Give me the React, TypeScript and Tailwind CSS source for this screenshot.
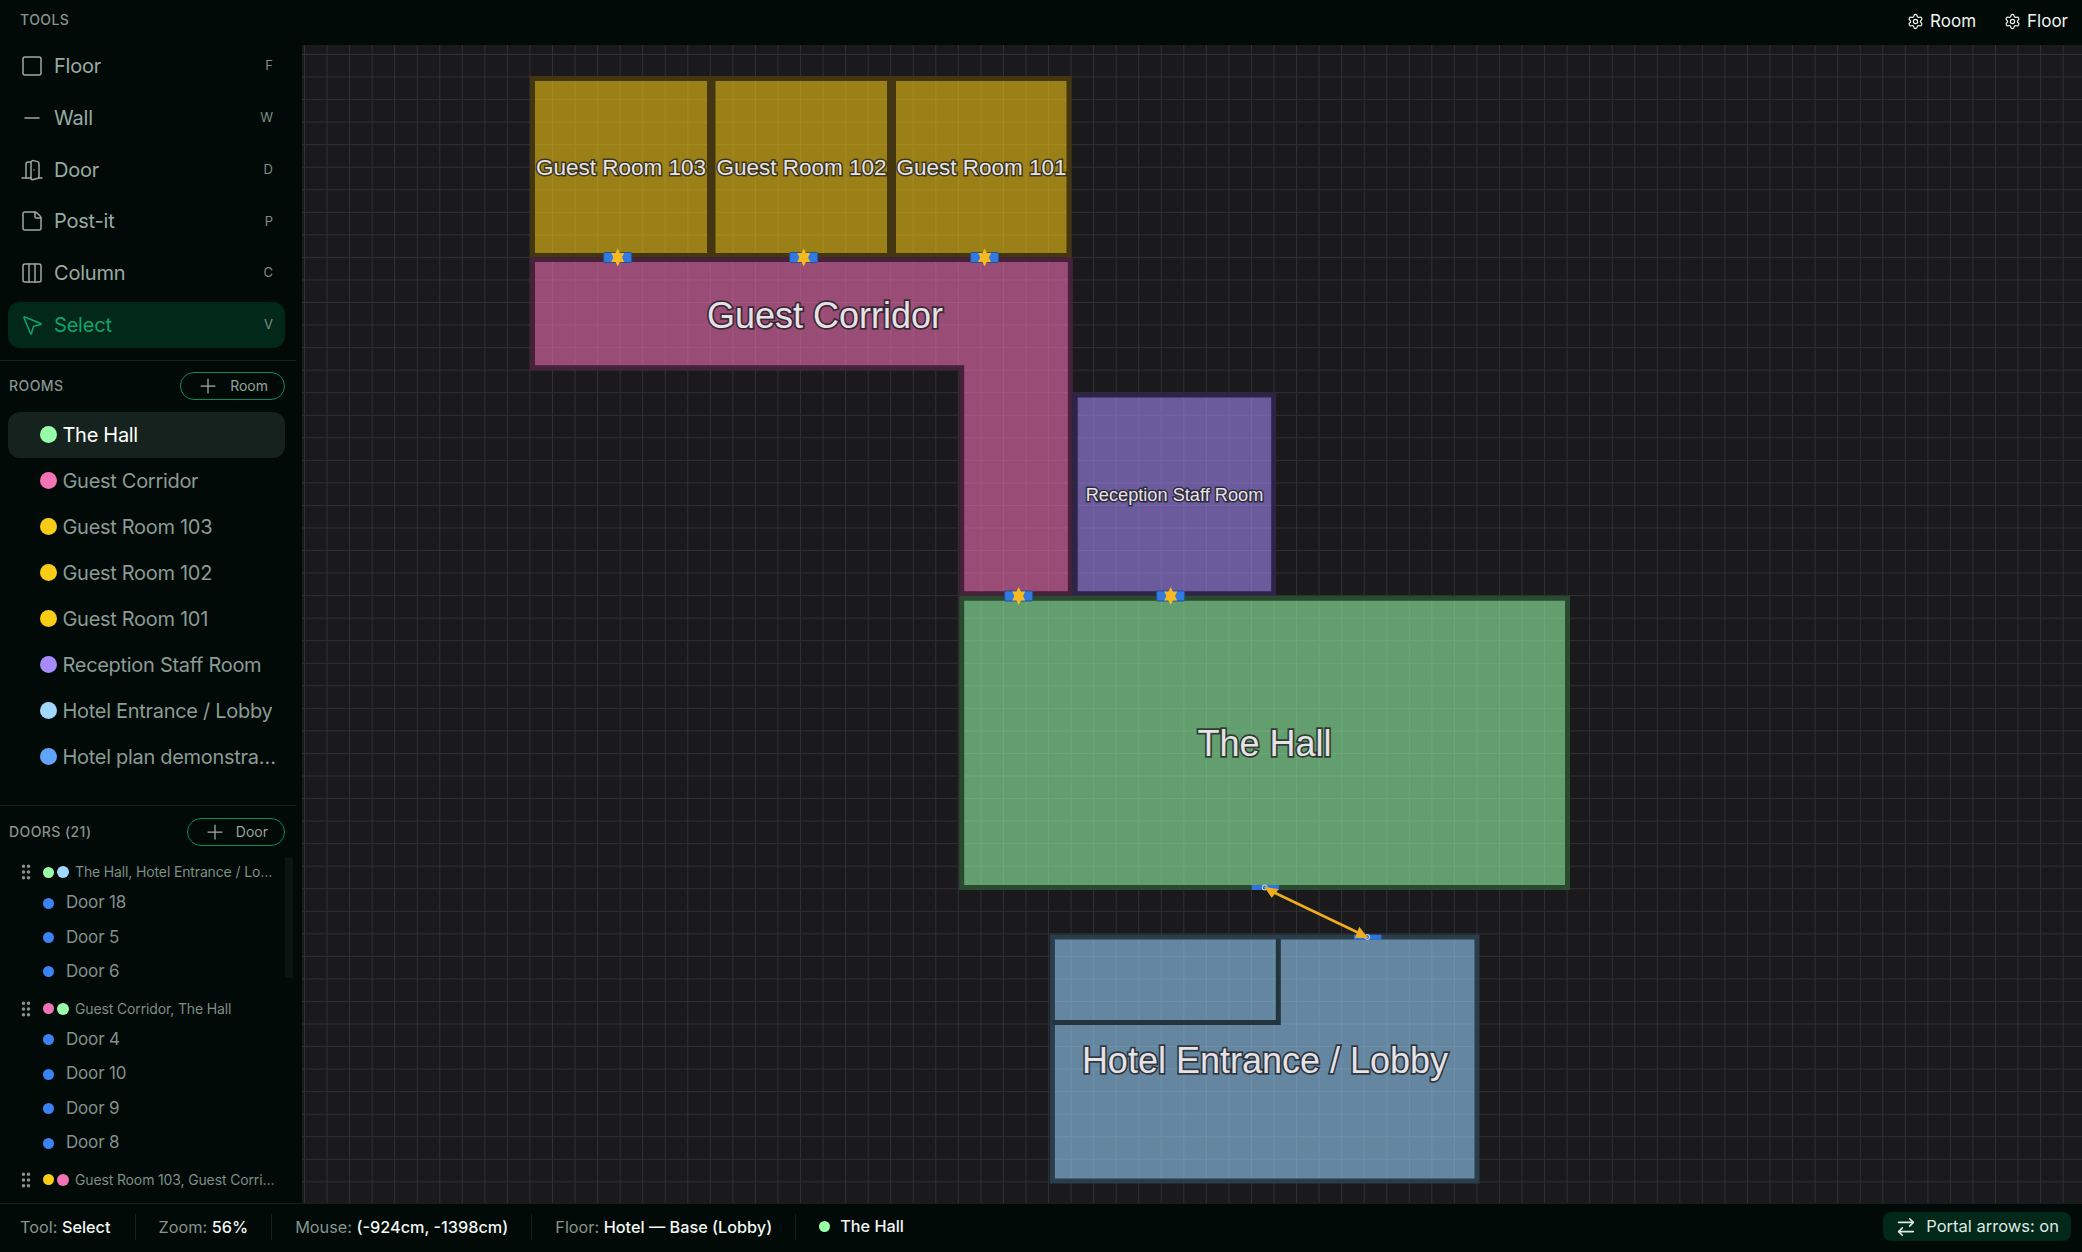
import { ArrowRightLeft, Columns3, DoorOpen, GripVertical, Minus, MousePointer2, Plus, Settings, Square, StickyNote } from "lucide-react";

const tools = [
  { name: "Floor", key: "F", icon: Square },
  { name: "Wall", key: "W", icon: Minus },
  { name: "Door", key: "D", icon: DoorOpen },
  { name: "Post-it", key: "P", icon: StickyNote },
  { name: "Column", key: "C", icon: Columns3 },
  { name: "Select", key: "V", icon: MousePointer2 },
];

const rooms = [
  { name: "The Hall", dot: "bg-[#98ffa8]" },
  { name: "Guest Corridor", dot: "bg-[#f472b6]" },
  { name: "Guest Room 103", dot: "bg-[#facc15]" },
  { name: "Guest Room 102", dot: "bg-[#facc15]" },
  { name: "Guest Room 101", dot: "bg-[#facc15]" },
  { name: "Reception Staff Room", dot: "bg-[#a78bfa]" },
  { name: "Hotel Entrance / Lobby", dot: "bg-[#a2d8ff]" },
  { name: "Hotel plan demonstration", dot: "bg-[#60a5fa]" },
];

const groups = [
  { label: "The Hall, Hotel Entrance / Lobby", a: "bg-[#98ffa8]", b: "bg-[#a2d8ff]", doors: ["Door 18", "Door 5", "Door 6"] },
  { label: "Guest Corridor, The Hall", a: "bg-[#f472b6]", b: "bg-[#98ffa8]", doors: ["Door 4", "Door 10", "Door 9", "Door 8"] },
  { label: "Guest Room 103, Guest Corridor", a: "bg-[#facc15]", b: "bg-[#f472b6]", doors: [] },
];

function AddButton({ label, width }: { label: string; width: string }) {
  return (
    <button className={`flex items-center justify-between h-7 pl-[15px] pr-4 border border-[#0f8a5f] rounded-full text-sm text-[#93a29c] ${width}`}>
      <Plus size={24} strokeWidth={1.25} className="text-[#a3b1ab]" />
      <span>{label}</span>
    </button>
  );
}

function Stat({ label, value }: { label: string; value: string }) {
  return (
    <span className="px-[23px] first:pl-5 first:pr-[24px] border-r border-[#14201a] leading-[26px]">
      <span className="text-[#86958f]">{label}: </span>
      <span className="font-medium text-[#f2f7f4]">{value}</span>
    </span>
  );
}

function Sidebar() {
  return (
    <aside className="w-[296px] flex flex-col shrink-0 overflow-hidden">
      <div className="h-[43px] pl-5 pt-[11px] text-[14px] leading-[18px] font-medium tracking-[0.03em] text-[#87958f]">TOOLS</div>
      <div className="flex flex-col gap-[5.8px] pl-2 pr-[11px] pb-3 border-b border-[#14201a]">
        {tools.map((t) => {
          const active = t.name === "Select";
          const Icon = t.icon;
          return (
            <div key={t.name} className={`flex items-center h-[46px] pl-[12px] pr-3 rounded-xl ${active ? "bg-[#02281a] text-[#0fa36f]" : "text-[#9aaaa4]"}`}>
              <Icon size={24} strokeWidth={1.5} />
              <span className="ml-[10px] text-xl tracking-[-0.01em]">{t.name}</span>
              <span className="ml-auto text-[13px] text-[#7f8e88]">{t.key}</span>
            </div>
          );
        })}
      </div>
      <div className="flex items-center justify-between h-7 mt-[11px] mb-3 pl-[9px] pr-[11px]">
        <span className="text-[14px] font-medium tracking-[0.03em] text-[#87958f]">ROOMS</span>
        <AddButton label="Room" width="w-[105px]" />
      </div>
      <div className="flex flex-col pl-2 pr-[11px] pb-[25px] border-b border-[#14201a]">
        {rooms.map((r, i) => (
          <div key={r.name} className={`flex items-center h-[46px] pl-8 pr-2 rounded-xl text-xl tracking-[-0.015em] ${i === 0 ? "bg-[#16221d] text-white" : "text-[#8b9b95]"}`}>
            <span className={`w-[17px] h-[17px] rounded-full shrink-0 ${r.dot}`} />
            <span className="ml-[5.5px] truncate">{r.name}</span>
          </div>
        ))}
      </div>
      <div className="flex items-center justify-between h-7 mt-3 mb-[12.5px] pl-[9px] pr-[11px]">
        <span className="text-[14px] font-medium tracking-[0.03em] text-[#87958f]">DOORS (21)</span>
        <AddButton label="Door" width="w-[98px]" />
      </div>
      <div className="relative flex-1 flex flex-col gap-[6px] overflow-hidden">
        <div className="absolute left-[285px] top-0 w-2 h-[120px] bg-[#0c1511]" />
        {groups.map((g) => (
          <div key={g.label}>
            <div className="flex items-center h-[27.5px] pl-4 pr-[20px] text-sm tracking-[-0.01em] text-[#7e8e88]">
              <GripVertical size={20} strokeWidth={2.25} className="shrink-0 text-[#87958f]" />
              <span className={`ml-[7px] w-[11px] h-[11px] rounded-full shrink-0 ${g.a}`} />
              <span className={`ml-[3px] w-3 h-3 rounded-full shrink-0 ${g.b}`} />
              <span className="ml-[6px] truncate">{g.label}</span>
            </div>
            {g.doors.map((d) => (
              <div key={d} className="flex items-center h-[34.4px] pl-[43px] text-[17px] tracking-[-0.01em] text-[#82918b]">
                <span className="w-[11px] h-[11px] rounded-full bg-[#3b82f6]" />
                <span className="ml-[12px]">{d}</span>
              </div>
            ))}
          </div>
        ))}
      </div>
    </aside>
  );
}

function Door({ cx, cy }: { cx: number; cy: number }) {
  return (
    <g>
      <rect x={cx - 14} y={cy - 5} width={28} height={10} rx={1} fill="#3279e0" stroke="#27508f" strokeWidth={1} />
      <path d={`M${cx} ${cy - 9}L${cx + 6.5} ${cy + 4.5}H${cx - 6.5}Z`} fill="#f6b91f" />
      <path d={`M${cx} ${cy + 9}L${cx + 6.5} ${cy - 4.5}H${cx - 6.5}Z`} fill="#f6b91f" />
    </g>
  );
}

function Label({ x, y, size, sw, children }: { x: number; y: number; size: number; sw: number; children: string }) {
  return (
    <text
      x={x}
      y={y}
      fontSize={size}
      textAnchor="middle"
      dominantBaseline="central"
      fill="#e6e2e6"
      stroke="#1c1c20"
      strokeOpacity={0.75}
      strokeWidth={sw}
      paintOrder="stroke"
      className="font-['Liberation_Sans',Arial,sans-serif]"
    >
      {children}
    </text>
  );
}

function Plan() {
  return (
    <svg viewBox="302 45 1780 1158" className="block w-full h-full">
      <path d="M532.5 78.5H709.5V255.5H532.5Z" fill="#facc15" fillOpacity={0.58} stroke="#433610" strokeWidth={5} />
      <path d="M713 78.5H889.5V255.5H713Z" fill="#facc15" fillOpacity={0.58} stroke="#433610" strokeWidth={5} />
      <path d="M893.5 78.5H1069V255.5H893.5Z" fill="#facc15" fillOpacity={0.58} stroke="#433610" strokeWidth={5} />
      <path d="M532.5 259.5H1070.4V593.7H961.7V367.8H532.5Z" fill="#f472b6" fillOpacity={0.58} stroke="#45213a" strokeWidth={5} />
      <path d="M1075.2 395H1273.7V593.7H1075.2Z" fill="#a78bfa" fillOpacity={0.58} stroke="#2c2548" strokeWidth={5} />
      <path d="M961.7 598.3H1567.5V887.5H961.7Z" fill="#98ffa8" fillOpacity={0.58} stroke="#2a4a30" strokeWidth={5} />
      <path d="M1052.4 937H1477V1181H1052.4Z" fill="#9cd6ff" fillOpacity={0.58} stroke="#2a3d4b" strokeWidth={5} />
      <path d="M1052.4 1022.5H1278.3V939" fill="none" stroke="#24343f" strokeWidth={5} />

      <Label x={621} y={167} size={22.5} sw={3}>Guest Room 103</Label>
      <Label x={801.5} y={167} size={22.5} sw={3}>Guest Room 102</Label>
      <Label x={981.5} y={167} size={22.5} sw={3}>Guest Room 101</Label>
      <Label x={825} y={315} size={36} sw={3.5}>Guest Corridor</Label>
      <Label x={1174.5} y={494.5} size={18.2} sw={3}>Reception Staff Room</Label>
      <Label x={1264.5} y={743} size={36} sw={3.5}>The Hall</Label>
      <Label x={1265} y={1060} size={36} sw={3.5}>Hotel Entrance / Lobby</Label>

      <Door cx={617.7} cy={257.5} />
      <Door cx={803.7} cy={257.5} />
      <Door cx={984.6} cy={257.5} />
      <Door cx={1018.7} cy={596} />
      <Door cx={1170.7} cy={596} />

      <rect x={1251.7} y={885} width={27.3} height={5} fill="#2f74dc" />
      <rect x={1354} y={934.7} width={27.3} height={5} fill="#2f74dc" />
      <circle cx={1264.7} cy={887.5} r={2.5} fill="none" stroke="#d5dde6" strokeWidth={1} />
      <circle cx={1367.3} cy={937} r={2.5} fill="none" stroke="#d5dde6" strokeWidth={1} />
      <path d="M1270 890.5L1362 934.5" stroke="#eeac1e" strokeWidth={2.5} />
      <path d="M1264 886.7L1278.7 889.3L1271.7 897.7Z" fill="#eeac1e" />
      <path d="M1368.3 938.3L1359.3 926.7L1355 937.7Z" fill="#eeac1e" />
    </svg>
  );
}

export default function App() {
  return (
    <div className="flex flex-col w-full h-screen overflow-hidden bg-[#010a06] font-['Inter',sans-serif]">
      <div className="flex flex-1 min-h-0">
        <Sidebar />
        <div className="flex flex-col flex-1 min-w-0">
          <header className="flex items-center justify-end h-[45px] pb-[2px] pl-[6px] pr-[14px] gap-[28px] text-[17px] text-[#eef4f1]">
            <span className="flex items-center gap-[6px]"><Settings size={17} strokeWidth={1.75} />Room</span>
            <span className="flex items-center gap-[6px]"><Settings size={17} strokeWidth={1.75} />Floor</span>
          </header>
          <main className="flex-1 min-h-0 ml-[6px] bg-[#1a1a1d] bg-[linear-gradient(#303035_1px,transparent_1px),linear-gradient(90deg,#303035_1px,transparent_1px)] bg-[size:22.55px_22.55px] bg-[position:2px_9px]">
            <Plan />
          </main>
        </div>
      </div>
      <footer className="flex items-center h-[49px] pb-[3px] shrink-0 border-t border-[#14201a] text-[16.25px]">
        <Stat label="Tool" value="Select" />
        <Stat label="Zoom" value="56%" />
        <Stat label="Mouse" value="(-924cm, -1398cm)" />
        <Stat label="Floor" value="Hotel — Base (Lobby)" />
        <span className="flex items-center gap-[10px] pl-[23px] font-medium text-[#f2f7f4]">
          <span className="w-[11px] h-[11px] rounded-full bg-[#98ffa8]" />
          The Hall
        </span>
        <button className="flex items-center gap-[9px] h-[29px] ml-auto mr-[11px] pl-3 pr-3 rounded-lg bg-[#02281a] text-[16.5px] text-[#dfe9e4]">
          <ArrowRightLeft size={22} strokeWidth={1.75} />
          Portal arrows: on
        </button>
      </footer>
    </div>
  );
}
